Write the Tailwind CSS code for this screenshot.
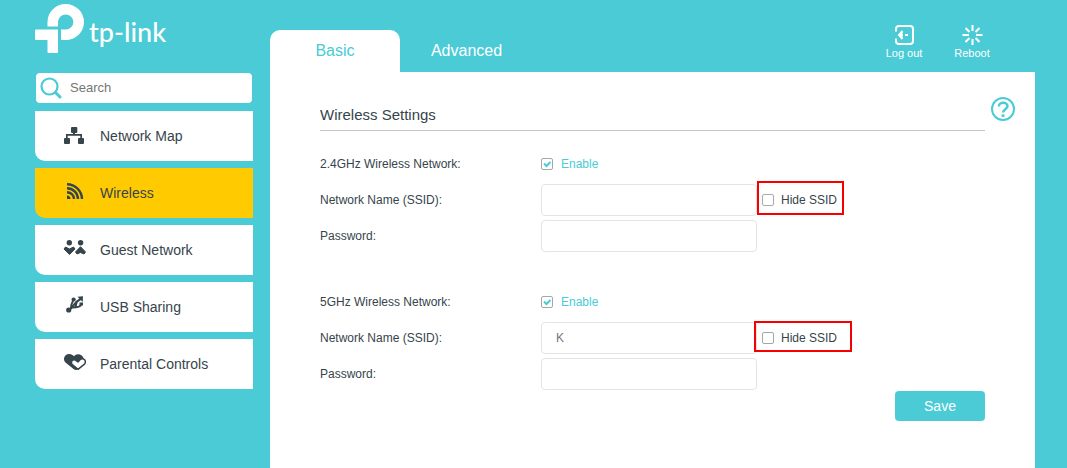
<!DOCTYPE html>
<html lang="en">
<head>
    <meta charset="UTF-8">
    <meta name="viewport" content="width=device-width, initial-scale=1.0">
    <title>Wireless Settings</title>
    <script src="https://cdn.jsdelivr.net/npm/@tailwindcss/browser@4"></script>
</head>
<body class="bg-[#4acbd6] font-['Liberation_Sans',Arial,sans-serif] text-[#36444b]">
    <div class="flex min-h-screen">
        <!-- Sidebar -->
        <aside class="w-[253px] shrink-0 pl-[35px] pt-1">
            <a href="#" class="flex h-[49px] items-center gap-[5px] text-white">
                <svg class="size-[49px]" viewBox="0 0 49 49" fill="currentColor">
                    <path d="M1 25.500H23V48Q23 49 22 49H13.500Q12.500 49 12.500 48V36H1Q0 36 0 35V26.500Q0 25.500 1 25.500Z"/>
                    <path d="M12.500 22.500V18A18.250 18 0 1 1 30.700 36H26V25.500H30.700A7.700 7.500 0 1 0 23 18V22.500Z"/>
                </svg>
                <span class="pt-1.5 font-['Lato',sans-serif] text-[27px] leading-8 font-medium">tp-link</span>
            </a>

            <div class="mx-px mt-5 flex h-[30px] items-center rounded bg-white pl-1">
                <svg class="size-[22px] shrink-0 text-[#4acbd6]" viewBox="0 0 22 22" fill="none" stroke="currentColor">
                    <circle cx="9.500" cy="9.500" r="8" stroke-width="2.200"/>
                    <path d="M15.500 15.500L20 20" stroke-width="3" stroke-linecap="round"/>
                </svg>
                <input type="search" aria-label="Search" placeholder="Search" class="ml-2 w-full min-w-0 text-[13px] outline-none placeholder:text-[#757575]">
            </div>

            <nav class="mt-2 flex flex-col gap-[7px] text-[14px]">
                <a href="#" class="flex h-[50px] items-center rounded-bl-[10px] bg-white pl-[27px]">
                    <svg class="mr-3.5 size-6" viewBox="0 0 24 24" fill="currentColor">
                        <rect x="9" y="3" width="6.300" height="6" rx="1"/>
                        <rect x="2" y="14" width="6" height="6" rx="1"/>
                        <rect x="16" y="14" width="6" height="6" rx="1"/>
                        <path d="M11 9H13V10H20V14H18.300V11.800H5.700V14H4V10H11Z"/>
                    </svg>
                    Network Map
                </a>
                <a href="#" aria-current="page" class="flex h-[50px] items-center rounded-bl-[10px] bg-[#ffcb00] pl-[27px]">
                    <svg class="mr-3.5 size-6" viewBox="0 0 24 24" fill="none" stroke="currentColor" stroke-width="2.400">
                        <path d="M5 3.200A15 15 0 0 1 20 18"/>
                        <path d="M5 7.200A11 11 0 0 1 16 18"/>
                        <path d="M5 11.200A7 7 0 0 1 12 18"/>
                        <path d="M5 14.500A3.500 3.500 0 0 1 8.500 18H5Z" fill="currentColor" stroke="none"/>
                    </svg>
                    Wireless
                </a>
                <a href="#" class="flex h-[50px] items-center rounded-bl-[10px] bg-white pl-[27px]">
                    <svg class="mr-3.5 size-6" viewBox="0 0 24 24" fill="currentColor">
                        <circle cx="7.300" cy="4.700" r="2.700"/>
                        <circle cx="18.600" cy="4.700" r="2.700"/>
                        <path d="M3.500 9L7.500 11L11.500 9L13 11L7.500 16.500L2 11Z" stroke="currentColor" stroke-linejoin="round"/>
                        <path d="M18.500 8.700L23.500 14L22 16L18.500 14.500L15 16L13.500 14Z" stroke="currentColor" stroke-linejoin="round"/>
                    </svg>
                    Guest Network
                </a>
                <a href="#" class="flex h-[50px] items-center rounded-bl-[10px] bg-white pl-[27px]">
                    <svg class="mr-3.5 size-6" viewBox="0 0 24 24" fill="none" stroke="currentColor" stroke-width="2" stroke-linecap="round" stroke-linejoin="round">
                        <path d="M7 15C10.500 13.500 11 8 18.500 4"/>
                        <path d="M11.300 5L9.500 9.500L9 13"/>
                        <path d="M10.500 12.500C14.500 12.500 18.500 12 19 9.500"/>
                        <path d="M14.500 7.500L13.500 12"/>
                        <circle cx="6.700" cy="15" r="2.600" fill="currentColor" stroke="none"/>
                        <circle cx="11.600" cy="4.500" r="2.100" fill="currentColor" stroke="none"/>
                        <path d="M15.500 1.800L21 1.300L20.700 7Z" fill="currentColor" stroke="none"/>
                        <path d="M17.500 7.500H21V10.500H17.500Z" fill="currentColor" stroke="none"/>
                    </svg>
                    USB Sharing
                </a>
                <a href="#" class="flex h-[50px] items-center rounded-bl-[10px] bg-white pl-[27px]">
                    <svg class="mr-3.5 size-6" viewBox="0 0 24 24">
                        <path d="M12 4.300C14 1.300 20 1.300 21.700 6.500L15 18Q13 18.300 11.500 17L3.500 10.500C.5 7.500 2.300 2 6.900 2C9.500 2 11 3 12 4.300Z" fill="currentColor"/>
                        <path d="M16 17.300L10.300 12.500C8 9.800 10.800 6.800 13.500 8.200L16 10L18 7.800C21 5 25 8.500 22.500 12.200Z" fill="white" stroke="currentColor" stroke-width="1.500" stroke-linejoin="round"/>
                    </svg>
                    Parental Controls
                </a>
            </nav>
        </aside>

        <div class="mr-8 ml-[17px] flex min-w-0 grow flex-col pt-[30px]">
            <header class="flex h-[42px] text-[16px]">
                <a href="#" class="flex w-[130px] items-center justify-center rounded-t-[10px] bg-white text-[#4acbd6]">Basic</a>
                <a href="#" class="flex w-[133px] items-center justify-center text-white">Advanced</a>
                <div class="-mt-[6px] mr-[41px] ml-auto flex gap-6 text-[11px] leading-4 text-white">
                    <button type="button" class="flex w-11 flex-col items-center whitespace-nowrap">
                        <svg class="size-[21px]" viewBox="0 0 21 21" fill="none" stroke="currentColor" stroke-width="2">
                            <path d="M2 7.500V5Q2 2 5 2H16Q19 2 19 5V17Q19 20 16 20H5Q2 20 2 17V14.500"/>
                            <path d="M8.500 7L5 11L8.500 15M5 11H9M11 11H14"/>
                            <path d="M4 11L8.500 7V15Z" fill="currentColor" stroke="none"/>
                        </svg>
                        Log out
                    </button>
                    <button type="button" class="flex w-11 flex-col items-center whitespace-nowrap">
                        <svg class="size-[21px]" viewBox="0 0 21 21" stroke="currentColor" stroke-width="2">
                            <path d="M10.500 1V7M10.500 15V21M.5 11H7M14 11H20.500M3.500 4L7.500 8M13.500 14L17.500 18M17.500 4L13.500 8M7.500 14L3.500 18"/>
                        </svg>
                        Reboot
                    </button>
                </div>
            </header>

            <main class="relative grow bg-white px-[50px] pt-[30px] pb-[47px] text-[12px]">
                <button type="button" aria-label="Help" class="absolute top-[25px] right-5 text-[#4acbd6]">
                    <svg class="size-6" viewBox="0 0 24 24" fill="none" stroke="currentColor" stroke-width="2">
                        <circle cx="12" cy="12" r="11"/>
                        <path d="M7.800 9.500C7.800 4.500 16.500 4.700 16.500 9.300C16.500 12.200 12 12.200 12 15.500" stroke-width="2.500"/>
                        <path d="M12 17.300V20" stroke-width="2.800"/>
                    </svg>
                </button>
                <h1 class="h-[29px] border-b border-[#c4c4c4] text-[15px] leading-[26px]">Wireless Settings</h1>

                <form class="mt-[17px]">
                    <fieldset class="flex flex-col gap-1">
                        <div class="flex h-8 items-center">
                            <span class="w-[221px]">2.4GHz Wireless Network:</span>
                            <label class="flex items-center gap-2 text-[#4acbd6]">
                                <span class="grid size-3">
                                    <input type="checkbox" checked class="peer col-start-1 row-start-1 appearance-none rounded-xs border border-[#a5a8aa]">
                                    <svg class="col-start-1 row-start-1 hidden size-3 peer-checked:block" viewBox="0 0 12 12" fill="none" stroke="currentColor" stroke-width="2"><path d="M3 5.500L5.500 8L9.500 4"/></svg>
                                </span>
                                Enable
                            </label>
                        </div>
                        <div class="flex h-8 items-center">
                            <label for="ssid24" class="w-[221px]">Network Name (SSID):</label>
                            <input id="ssid24" type="text" class="h-8 w-[216px] rounded border border-[#e4e4e4] px-3.5">
                            <label class="relative ml-[5px] flex h-8 items-center gap-[7px]">
                                <input type="checkbox" class="size-3 appearance-none rounded-xs border border-[#a5a8aa] checked:bg-[#4acbd6]">
                                Hide SSID
                                <span class="absolute -top-[3px] -right-[7px] bottom-px -left-[5px] border-2 border-[#f80000]"></span>
                            </label>
                        </div>
                        <div class="flex h-8 items-center">
                            <label for="pass24" class="w-[221px]">Password:</label>
                            <input id="pass24" type="text" class="h-8 w-[216px] rounded border border-[#e4e4e4] px-3.5">
                        </div>
                    </fieldset>

                    <fieldset class="mt-[34px] flex flex-col gap-1">
                        <div class="flex h-8 items-center">
                            <span class="w-[221px]">5GHz Wireless Network:</span>
                            <label class="flex items-center gap-2 text-[#4acbd6]">
                                <span class="grid size-3">
                                    <input type="checkbox" checked class="peer col-start-1 row-start-1 appearance-none rounded-xs border border-[#a5a8aa]">
                                    <svg class="col-start-1 row-start-1 hidden size-3 peer-checked:block" viewBox="0 0 12 12" fill="none" stroke="currentColor" stroke-width="2"><path d="M3 5.500L5.500 8L9.500 4"/></svg>
                                </span>
                                Enable
                            </label>
                        </div>
                        <div class="flex h-8 items-center">
                            <label for="ssid5" class="w-[221px]">Network Name (SSID):</label>
                            <input id="ssid5" type="text" value="K" class="h-8 w-[216px] rounded border border-[#e4e4e4] px-3.5 text-[#757575]">
                            <label class="relative ml-[5px] flex h-8 items-center gap-[7px]">
                                <input type="checkbox" class="size-3 appearance-none rounded-xs border border-[#a5a8aa] checked:bg-[#4acbd6]">
                                Hide SSID
                                <span class="absolute -top-px -right-[15px] bottom-0.5 -left-2 border-2 border-[#f80000]"></span>
                            </label>
                        </div>
                        <div class="flex h-8 items-center">
                            <label for="pass5" class="w-[221px]">Password:</label>
                            <input id="pass5" type="text" class="h-8 w-[216px] rounded border border-[#e4e4e4] px-3.5">
                        </div>
                    </fieldset>

                    <button type="button" class="mt-px ml-auto block h-[30px] w-[90px] rounded bg-[#4acbd6] text-[14px] text-white">Save</button>
                </form>
            </main>
        </div>
    </div>
</body>
</html>
